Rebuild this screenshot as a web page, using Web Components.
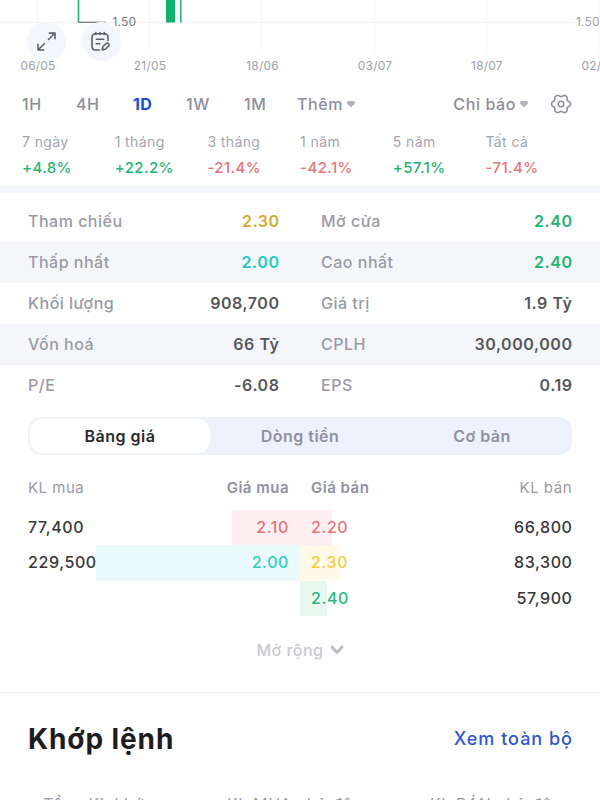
<!DOCTYPE html>
<html lang="vi">
<head>
<meta charset="utf-8">
<meta name="viewport" content="width=device-width, initial-scale=1">
<title>Bảng giá</title>
<style>
  body {
    margin: 0;
    height: 800px;
    overflow: hidden;
    background: #fefefe;
    color: #4a4a4e;
    font-family: Inter, "Liberation Sans", sans-serif;
    font-size: 16px;
    letter-spacing: 0.6px;
    --muted: #9a9aa5;
    --up: #1fb573;
    --down: #e7727b;
    --floor: #23cbc0;
    --ref: #cfae2c;
    --blue: #1c4bd0;
    --stripe: #f4f6fa;
  }
</style>
</head>
<body>
<stock-page></stock-page>

<script>
class StockChart extends HTMLElement {
  constructor() {
    super();
    const shadow = this.attachShadow({ mode: 'open' });
    const dates = [[38, '06/05'], [150, '21/05'], [262.5, '18/06'], [375, '03/07'], [487, '18/07'], [599, '02/08']];

    shadow.innerHTML = `
    <style>
    :host { display: block; position: relative; height: 80px; overflow: hidden; }
    svg { display: block; }
    text { font-size: 12px; fill: #a0a0a8; letter-spacing: 0.2px; }
    .tools { position: absolute; left: 27px; top: 22px; display: flex; gap: 16px; }
    .tool { width: 39px; height: 39px; border-radius: 50%; background: #f3f6fb; }
    .tool svg { fill: none; stroke: #606066; stroke-width: 1.6; stroke-linecap: round; stroke-linejoin: round; }
    </style>
    <svg class="plot" width="600" height="80">
      <path d="M0 22.5H575" stroke="#f1f1f3"/>
      ${dates.map(([x]) => `<path d="M${Math.floor(x) - .5} 0V52" stroke="#f5f5f7"/>`).join('')}
      <path d="M78.500 0V22" stroke="#1fb573" stroke-width="1.600"/>
      <path d="M78 22.300H106" stroke="#77777d" stroke-width="1.300"/>
      <path d="M166 0h9v22.500h-9z" fill="#0db26b"/>
      <path d="M180.800 0V22.500" stroke="#1fb573" stroke-width="1.500"/>
      <text x="112.500" y="26.300" style="fill:#77777d">1.50</text>
      <text x="576" y="26.300">1.50</text>
      ${dates.map(([x, d]) => `<text x="${x}" y="70.300" text-anchor="middle">${d}</text>`).join('')}
    </svg>
    <div class="tools">
      <div class="tool"><svg width="39" height="39">
        <path d="M21.500 17.500L27.700 11.300M22.300 11.100H28V16.800M17.300 21.700L11.300 27.700M11 22.300V28H16.800"/>
      </svg></div>
      <div class="tool"><svg width="39" height="39">
        <path d="M17.500 28H13.800Q10 28 10 24.200V15.500Q10 11.800 13.800 11.800H22.300Q26 11.800 26 15.500V18.500"/>
        <path d="M13.800 10.600V12.500M18 10.600V12.500M22.300 10.600V12.500M14.300 17.300H21.800M14.300 21.700H17.800"/>
        <path d="M20.900 24.700L24.200 21.500Q25.600 20.700 26.600 21.700Q27.500 22.700 26.700 24L23.300 27.300L20.200 27.900Z"/>
      </svg></div>
    </div>
    `;
  }
}

// six-lobed outline around the middle of a 22x22 box
function gearPath() {
  const points = [];
  for (let a = 0; a < 360; a += 5) {
    const t = a * Math.PI / 180;
    const r = 8.5 + 1.1 * Math.cos(6 * t) - 0.2 * Math.cos(12 * t);
    points.push(`${(11 + r * Math.cos(t)).toFixed(2)} ${(11 + r * Math.sin(t)).toFixed(2)}`);
  }
  return `M${points.join('L')}Z`;
}

class TimeframeBar extends HTMLElement {
  constructor() {
    super();
    const shadow = this.attachShadow({ mode: 'open' });
    const caret = '<svg width="10" height="8"><path d="M2.700 1H7.300Q9.800 1.600 8.800 3.700L6 6.600Q5 7.500 4 6.600L1.200 3.700Q.2 1.600 2.700 1Z" fill="#b3b3bc"/></svg>';

    shadow.innerHTML = `
    <style>
    :host { display: flex; align-items: center; height: 48px; padding: 0 28px 0 22px; color: #8d8d99; font-weight: 500; }
    span { white-space: nowrap; }
    .frames { display: grid; grid-template-columns: 54px 57px 53px 58px 53px auto; }
    .active { color: var(--blue); font-weight: 700; letter-spacing: 0.3px; }
    .menu { display: flex; align-items: center; gap: 3px; }
    .right { display: flex; align-items: center; gap: 21px; margin-left: auto; }
    svg { display: block; }
    </style>
    <div class="frames">
      <span>1H</span><span>4H</span><span class="active">1D</span><span>1W</span><span>1M</span>
      <span class="menu">Thêm ${caret}</span>
    </div>
    <div class="right">
      <span class="menu">Chỉ báo ${caret}</span>
      <svg width="22" height="22" fill="none" stroke="#8d8d99" stroke-width="1.500" stroke-linejoin="round">
        <path d="${gearPath()}"/>
        <circle cx="11" cy="11" r="2.800"/>
      </svg>
    </div>
    `;
  }
}

class PerfItem extends HTMLElement {
  constructor() {
    super();
    const shadow = this.attachShadow({ mode: 'open' });
    const value = this.getAttribute('value');

    shadow.innerHTML = `
    <style>
    :host { display: block; white-space: nowrap; }
    .label { font-size: 14px; line-height: 26px; color: #a5a5ae; letter-spacing: 0.4px; }
    .value { font-size: 15px; line-height: 25px; font-weight: 500; letter-spacing: 0.4px; color: var(${value[0] === '+' ? '--up' : '--down'}); }
    </style>
    <div class="label"><slot></slot></div>
    <div class="value">${value}</div>
    `;
  }
}

class StatCell extends HTMLElement {
  constructor() {
    super();
    const shadow = this.attachShadow({ mode: 'open' });
    const tone = this.getAttribute('tone');

    shadow.innerHTML = `
    <style>
    :host { display: flex; justify-content: space-between; align-items: center; padding-bottom: 2px; letter-spacing: 0.5px; }
    .label { color: var(--muted); font-weight: 450; }
    .value { font-weight: 600; letter-spacing: 0.55px; margin-right: -0.5px; color: ${tone ? `var(--${tone})` : '#56565b'}; }
    </style>
    <span class="label"><slot></slot></span>
    <span class="value">${this.getAttribute('value')}</span>
    `;
  }
}

class TabBar extends HTMLElement {
  constructor() {
    super();
    const shadow = this.attachShadow({ mode: 'open' });
    const tabs = this.getAttribute('tabs').split('|');

    shadow.innerHTML = `
    <style>
    :host { display: grid; grid-template-columns: repeat(3, 1fr); height: 38px; box-sizing: border-box; padding: 2px;
      border-radius: 14px; background: #edf1fb; color: #9090a0; font-weight: 600; letter-spacing: 0.5px; }
    div { display: flex; align-items: center; justify-content: center; border-radius: 12px; }
    div:first-child { padding-right: 4px; }
    div:last-child { padding-left: 4px; }
    .active { background: #fff; color: #29292c; }
    </style>
    ${tabs.map((t, i) => `<div class="${i === 0 ? 'active' : ''}">${t}</div>`).join('')}
    `;
  }
}

// one side of a depth level: the bar grows away from the middle
class DepthSide extends HTMLElement {
  constructor() {
    super();
    const shadow = this.attachShadow({ mode: 'open' });
    const buy = this.getAttribute('side') === 'buy';
    const bar = this.getAttribute('bar');
    const from = buy ? 'right' : 'left';

    shadow.innerHTML = `
    <style>
    :host { display: flex; flex-direction: ${buy ? 'row' : 'row-reverse'}; justify-content: space-between; align-items: center;
      padding: ${buy ? '0 11px 1px 28px' : '0 28px 1px 11px'};
      background: linear-gradient(${this.getAttribute('fill')} 0 0) ${from} / ${bar}px 100% no-repeat; }
    .volume { font-weight: 500; color: #37373a; }
    .price { font-weight: 500; color: ${this.getAttribute('color')}; }
    span { margin-right: ${buy ? '0' : '-0.5px'}; }
    </style>
    <span class="volume">${this.getAttribute('volume')}</span>
    <span class="price">${this.getAttribute('price')}</span>
    `;
  }
}

class StockPage extends HTMLElement {
  constructor() {
    super();
    const shadow = this.attachShadow({ mode: 'open' });

    shadow.innerHTML = `
    <style>
    :host { display: block; }
    .perf { display: grid; grid-template-columns: repeat(6, 92.700px); padding: 1px 0 0 22px; height: 58px; box-sizing: border-box; }
    .divider { height: 7px; background: #f3f7fb; margin-bottom: 8px; }
    .row { display: grid; grid-template-columns: 251px 251px; column-gap: 42px; height: 41px; padding: 0 28px; }
    .row:nth-child(even) { background: var(--stripe); }
    tab-bar { margin: 11px 28px 0; }
    .head { display: grid; grid-template-columns: 1fr 1fr; column-gap: 22px; height: 55px; box-sizing: border-box; padding: 10px 28px 0;
      align-items: center; font-size: 15px; letter-spacing: 0.5px; color: var(--muted); }
    .head div { display: flex; justify-content: space-between; }
    .head b { font-weight: 600; color: #9090a0; }
    .level { display: grid; grid-template-columns: 1fr 1fr; height: 35.300px; }
    .more { display: flex; justify-content: center; align-items: center; gap: 6px; height: 76px; padding-bottom: 8px; box-sizing: border-box;
      color: #c9c9d2; font-weight: 500; letter-spacing: 0.5px; }
    .title { display: flex; justify-content: space-between; align-items: center; height: 92px; padding: 0 28px;
      border-top: 1px solid #f0f0f2; }
    h2 { margin: 0; font-size: 28px; font-weight: 700; letter-spacing: 0.9px; color: #1d1d1f; }
    .title a { font-size: 18px; font-weight: 500; letter-spacing: 1px; margin-right: -1px; color: #2f56cf; }
    .columns { display: grid; grid-template-columns: 184px 203px 1fr; padding: 9px 0 0 43px; line-height: 20px; letter-spacing: 0.6px;
      color: var(--muted); white-space: nowrap; }
    </style>
    <stock-chart></stock-chart>
    <timeframe-bar></timeframe-bar>
    <div class="perf">
      <perf-item value="+4.8%">7 ngày</perf-item>
      <perf-item value="+22.2%">1 tháng</perf-item>
      <perf-item value="-21.4%">3 tháng</perf-item>
      <perf-item value="-42.1%">1 năm</perf-item>
      <perf-item value="+57.1%">5 năm</perf-item>
      <perf-item value="-71.4%">Tất cả</perf-item>
    </div>
    <div class="divider"></div>
    <div class="stats">
      <div class="row"><stat-cell value="2.30" tone="ref">Tham chiếu</stat-cell><stat-cell value="2.40" tone="up">Mở cửa</stat-cell></div>
      <div class="row"><stat-cell value="2.00" tone="floor">Thấp nhất</stat-cell><stat-cell value="2.40" tone="up">Cao nhất</stat-cell></div>
      <div class="row"><stat-cell value="908,700">Khối lượng</stat-cell><stat-cell value="1.9 Tỷ">Giá trị</stat-cell></div>
      <div class="row"><stat-cell value="66 Tỷ">Vốn hoá</stat-cell><stat-cell value="30,000,000">CPLH</stat-cell></div>
      <div class="row"><stat-cell value="-6.08">P/E</stat-cell><stat-cell value="0.19">EPS</stat-cell></div>
    </div>
    <tab-bar tabs="Bảng giá|Dòng tiền|Cơ bản"></tab-bar>
    <div class="head">
      <div><span>KL mua</span><b>Giá mua</b></div>
      <div><b>Giá bán</b><span>KL bán</span></div>
    </div>
    <div class="level">
      <depth-side side="buy" volume="77,400" price="2.10" color="#e7727b" bar="68" fill="#fdeff1"></depth-side>
      <depth-side side="sell" volume="66,800" price="2.20" color="#e7727b" bar="32" fill="#fdeff1"></depth-side>
    </div>
    <div class="level">
      <depth-side side="buy" volume="229,500" price="2.00" color="#35cbc2" bar="204" fill="#eaf9f9"></depth-side>
      <depth-side side="sell" volume="83,300" price="2.30" color="#efcf43" bar="39" fill="#fff9e7"></depth-side>
    </div>
    <div class="level">
      <span></span>
      <depth-side side="sell" volume="57,900" price="2.40" color="#2bb67c" bar="27" fill="#e8f8f1"></depth-side>
    </div>
    <div class="more">Mở rộng
      <svg width="14" height="10" fill="none" stroke="#b9b9c2" stroke-width="2.800" stroke-linecap="round" stroke-linejoin="round"><path d="M2 2L7 7.500L12 2"/></svg>
    </div>
    <div class="title"><h2>Khớp lệnh</h2><a>Xem toàn bộ</a></div>
    <div class="columns"><span>Tổng KL khớp</span><span>KL MUA chủ động</span><span>KL BÁN chủ động</span></div>
    `;
  }
}

customElements.define('stock-chart', StockChart);
customElements.define('timeframe-bar', TimeframeBar);
customElements.define('perf-item', PerfItem);
customElements.define('stat-cell', StatCell);
customElements.define('tab-bar', TabBar);
customElements.define('depth-side', DepthSide);
customElements.define('stock-page', StockPage);
</script>
</body>
</html>
